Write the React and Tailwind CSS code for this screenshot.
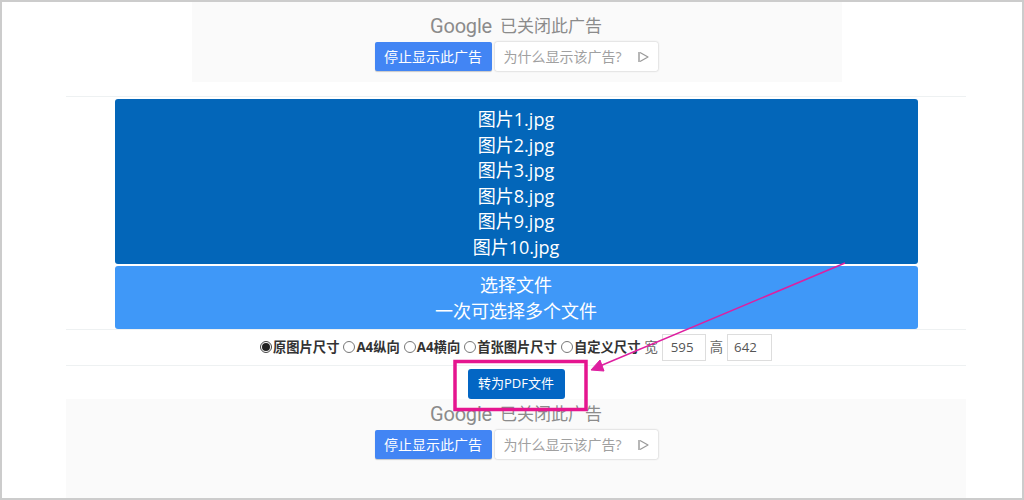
const F = { fontFamily: '"Open Sans","Noto Sans CJK SC",sans-serif' };

function GoogleAd({ className, inner }) {
  return (
    <div className={`flex flex-col items-center bg-[#fafafa] ${className}`}>
      <div className={`h-[33px] flex items-center gap-[8px] text-[#8b8b8b] text-[17px] shrink-0 ${inner}`}>
        <span className="text-[20px] tracking-[-0.2px]" style={{ fontFamily: '"Roboto",sans-serif' }}>Google</span>
        <span>已关闭此广告</span>
      </div>
      <div className="flex gap-[3px] text-[14px]">
        <div className="w-[117px] h-[29px] flex items-center justify-center bg-[#4285f4] text-white rounded-[2px] shadow-[0_1px_1px_rgba(0,0,0,0.2)]">停止显示此广告</div>
        <div className="w-[163px] h-[29px] flex items-center pl-[9px] bg-white text-[#a0a0a0] rounded-[2px] shadow-[0_0_2px_rgba(0,0,0,0.3)]">
          <span className="whitespace-nowrap w-[122px]">为什么显示该广告?</span>
          <svg className="ml-[12px]" width="11" height="12" viewBox="0 0 11 12" fill="none" stroke="#999999" strokeWidth="1.2">
            <path d="M1 1 V11" strokeWidth="1.4" />
            <path d="M2 1.5 L10 6 L2 10.5" strokeLinejoin="round" />
          </svg>
        </div>
      </div>
    </div>
  );
}

function Radio({ label, checked }) {
  return (
    <span className="inline-flex items-center">
      <span className={`w-[12px] h-[12px] mr-[1px] rounded-full border flex items-center justify-center relative top-[-1px] ${checked ? "border-[#444]" : "border-[#777]"}`}>
        {checked && <span className="w-[8px] h-[8px] rounded-full bg-[#222]" />}
      </span>
      <span className="font-bold">{label}</span>
    </span>
  );
}

export default function App() {
  return (
    <div className="w-[1024px] h-[500px] overflow-hidden relative bg-white border-2 border-[#cccccc] box-border" style={F}>
      <div className="w-[900px] ml-[64px] flex flex-col items-center">
        <GoogleAd className="w-[650px] h-[80px] shrink-0 ml-[2px] pr-[2px] pt-[7px]" inner="" />
        <div className="w-full h-[15px] border-b border-[#eef1f2] shrink-0" />
        <div className="h-[2px] shrink-0" />
        <div className="w-[803px] h-[165px] shrink-0 bg-[#0366b9] rounded-[3px] text-white text-[18px] leading-[25.5px] text-center pt-[8px]">
          <div>图片1.jpg</div>
          <div>图片2.jpg</div>
          <div>图片3.jpg</div>
          <div>图片8.jpg</div>
          <div>图片9.jpg</div>
          <div>图片10.jpg</div>
        </div>
        <div className="w-[803px] h-[63px] mt-[2px] shrink-0 bg-[#3f98f8] rounded-[3px] text-white text-[18px] leading-[25.5px] text-center pt-[7px]">
          <div>选择文件</div>
          <div>一次可选择多个文件</div>
        </div>
        <div className="w-full h-[37px] shrink-0 border-t border-b border-[#eef1f2] flex items-center justify-center text-[13.3px] text-[#333]">
          <div className="flex items-center gap-[4px] whitespace-nowrap">
            <Radio label="原图片尺寸" checked />
            <Radio label="A4纵向" />
            <Radio label="A4横向" />
            <Radio label="首张图片尺寸" />
            <Radio label="自定义尺寸" />
            <span className="text-[#666]">宽</span>
            <span className="w-[44px] h-[27px] border border-[#dddddd] text-[#555] pl-[8px] flex items-center">595</span>
            <span className="text-[#666]">高</span>
            <span className="w-[45px] h-[27px] border border-[#dddddd] text-[#555] pl-[6px] flex items-center">642</span>
          </div>
        </div>
        <div className="h-[33px] shrink-0 pt-[3px]">
          <div className="w-[97px] h-[30px] bg-[#0366c4] rounded-[3px] text-white text-[13px] flex items-center justify-center">转为PDF文件</div>
        </div>
        <GoogleAd className="w-full h-[99px] shrink-0" inner="-mt-[2px]" />
      </div>

      <svg className="absolute left-[-2px] top-[-2px] pointer-events-none" width="1024" height="500" fill="none">
        <rect x="455" y="361.5" width="131" height="48" stroke="#e5158f" strokeWidth="3.5" />
        <path d="M845 263 L600 366" stroke="#de1fa0" strokeWidth="1.5" />
        <path d="M591 370 L600 360 L604 371 Z" fill="#de1fa0" stroke="#de1fa0" />
      </svg>
    </div>
  );
}
